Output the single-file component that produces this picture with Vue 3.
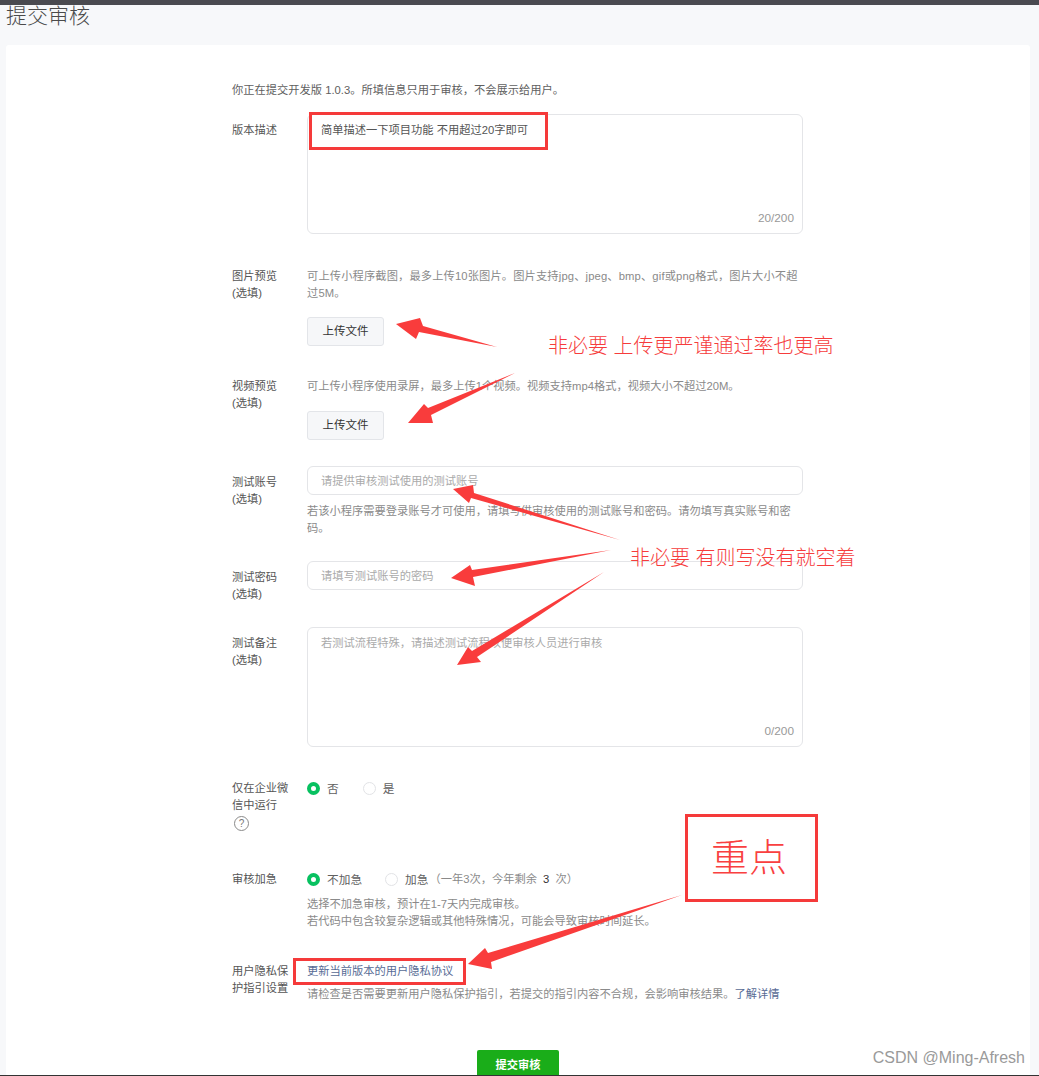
<script setup>
import {ref} from "vue";

const desc = ref("简单描述一下项目功能 不用超过20字即可");

// 标注箭头
const arrows = [
  "396,324 420,318 423,326 497,347 419,332 416,339",
  "515,373 428,408 424,404 408,423 433,423 431,415",
  "453,489 473,485 474,493 620,540 471,498 469,503",
  "611,550 472,570 470,565 451,578 475,586 473,577",
  "604,572 472,651 468,647 457,665 481,662 477,657",
  "682,895 488,953 485,948 468,964 492,969 491,962"
];
</script>

<template>
  <div class="page">
    <div class="topbar"></div>
    <h1 class="title">提交审核</h1>
    <div class="card">
      <div class="form">
        <p class="intro">你正在提交开发版 1.0.3。所填信息只用于审核，不会展示给用户。</p>

        <div class="row row-desc">
          <div class="label pad">版本描述</div>
          <div class="control">
            <div class="area-wrap">
              <textarea class="area" v-model="desc"></textarea>
              <span class="counter">20/200</span>
            </div>
          </div>
        </div>

        <div class="row row-pic">
          <div class="label">图片预览<br>(选填)</div>
          <div class="control">
            <p class="hint">可上传小程序截图，最多上传10张图片。图片支持jpg、jpeg、bmp、gif或png格式，图片大小不超过5M。</p>
            <button class="upload upload-pic">上传文件</button>
          </div>
        </div>

        <div class="row row-video">
          <div class="label">视频预览<br>(选填)</div>
          <div class="control">
            <p class="hint">可上传小程序使用录屏，最多上传1个视频。视频支持mp4格式，视频大小不超过20M。</p>
            <button class="upload">上传文件</button>
          </div>
        </div>

        <div class="row row-account">
          <div class="label pad">测试账号<br>(选填)</div>
          <div class="control">
            <input class="field" placeholder="请提供审核测试使用的测试账号">
            <p class="hint hint-below">若该小程序需要登录账号才可使用，请填写供审核使用的测试账号和密码。请勿填写真实账号和密码。</p>
          </div>
        </div>

        <div class="row row-pass">
          <div class="label pad">测试密码<br>(选填)</div>
          <div class="control">
            <input class="field" placeholder="请填写测试账号的密码">
          </div>
        </div>

        <div class="row row-note">
          <div class="label pad">测试备注<br>(选填)</div>
          <div class="control">
            <div class="area-wrap">
              <textarea class="area" placeholder="若测试流程特殊，请描述测试流程以便审核人员进行审核"></textarea>
              <span class="counter">0/200</span>
            </div>
          </div>
        </div>

        <div class="row row-wework">
          <div class="label">
            仅在企业微信中运行
            <span class="help">?</span>
          </div>
          <div class="control radios">
            <span class="radio on"></span><span class="radio-text">否</span>
            <span class="radio second"></span><span class="radio-text">是</span>
          </div>
        </div>

        <div class="row row-urgent">
          <div class="label">审核加急</div>
          <div class="control">
            <div class="radios">
              <span class="radio on"></span><span class="radio-text">不加急</span>
              <span class="radio third"></span><span class="radio-text">加急</span>
              <span class="quota">（一年3次，今年剩余 <b>3</b> 次）</span>
            </div>
            <p class="hint hint-below">选择不加急审核，预计在1-7天内完成审核。<br>若代码中包含较复杂逻辑或其他特殊情况，可能会导致审核时间延长。</p>
          </div>
        </div>

        <div class="row row-privacy">
          <div class="label">用户隐私保护指引设置</div>
          <div class="control">
            <a class="link">更新当前版本的用户隐私协议</a>
            <p class="hint hint-below">请检查是否需要更新用户隐私保护指引，若提交的指引内容不合规，会影响审核结果。<a class="link">了解详情</a></p>
          </div>
        </div>
      </div>
      <button class="submit">提交审核</button>
    </div>

    <!-- 截图上的红色标注 -->
    <svg class="marks" width="1039" height="1076" viewBox="0 0 1039 1076">
      <polygon v-for="(points, i) in arrows" :key="i" :points="points" fill="#f93c3c"></polygon>
    </svg>
    <div class="box box-desc"></div>
    <div class="box box-link"></div>
    <div class="box box-key">重点</div>
    <div class="note note-upload">非必要 上传更严谨通过率也更高</div>
    <div class="note note-test">非必要 有则写没有就空着</div>
    <div class="watermark">CSDN @Ming-Afresh</div>
  </div>
</template>

<style scoped>
.page {
  position: relative;
  width: 1039px;
  height: 1076px;
  overflow: hidden;
  background: #f7f8fa;
  font-family: "Liberation Sans", "Noto Sans CJK SC", sans-serif;
  font-size: 11.25px;
  line-height: 17px;
  color: #555;
}

.page::after {
  content: "";
  position: absolute;
  left: 0;
  right: 0;
  bottom: 0;
  height: 1px;
  background: #333;
}

.topbar {
  height: 5px;
  background: #4a4a50;
}

.title {
  margin: 0 0 0 6px;
  height: 40px;
  font-size: 21px;
  font-weight: 300;
  line-height: 22px;
  color: #4a4a4a;
}

.card {
  margin: 0 9px 0 6px;
  height: 1100px;
  background: #fff;
  border-radius: 3px;
  padding-top: 37px;
  box-sizing: border-box;
}

.form {
  margin-left: 226px;
  width: 571px;
}

.intro {
  margin: 0;
  color: #606060;
}

.row {
  display: flex;
}

.label {
  flex: none;
  width: 61px;
  margin-right: 14px;
  color: #555;
}

.label.pad {
  padding-top: 8px;
}

.control {
  width: 496px;
}

.row-desc { margin-top: 15px; }
.row-pic { margin-top: 34px; }
.row-video { margin-top: 32px; }
.row-account { margin-top: 26px; }
.row-pass { margin-top: 24px; }
.row-note { margin-top: 24px; }
.row-wework { margin-top: 33px; }
.row-urgent { margin-top: 40px; }
.row-privacy { margin-top: 33px; }

.hint {
  margin: 0;
  color: #8a8a8a;
}

.row-pic .hint {
  letter-spacing: 0.13px;
}

.hint-below {
  margin-top: 8px;
}

.area-wrap {
  position: relative;
  height: 120px;
}

.area,
.field {
  display: block;
  width: 100%;
  box-sizing: border-box;
  border: 1px solid #e4e5e8;
  border-radius: 6px;
  background: #fff;
  padding: 7px 13px;
  font: inherit;
  color: #555;
  outline: none;
}

.area {
  height: 120px;
  resize: none;
}

.field {
  height: 29px;
  padding-top: 5px;
  padding-bottom: 5px;
}

.area::placeholder,
.field::placeholder {
  color: #aaa;
  opacity: 1;
}

.counter {
  position: absolute;
  right: 9px;
  bottom: 7px;
  color: #999;
  font-size: 11.8px;
}

.upload {
  display: block;
  width: 77px;
  height: 29px;
  margin-top: 16px;
  padding: 0;
  background: #f6f7f9;
  border: 1px solid #e3e5e9;
  border-radius: 3px;
  font: inherit;
  font-size: 11.5px;
  color: #333;
}

.upload-pic {
  margin-top: 15px;
}

.help {
  display: block;
  width: 13px;
  height: 13px;
  margin: 2px 0 0 2px;
  border: 1px solid #8a8a8a;
  border-radius: 50%;
  text-align: center;
  line-height: 13px;
  font-size: 10px;
  color: #777;
}

.radios {
  display: flex;
  align-items: center;
  height: 17px;
}

.radio {
  flex: none;
  width: 13px;
  height: 13px;
  box-sizing: border-box;
  border: 1px solid #e2e3e6;
  border-radius: 50%;
  background: #fff;
}

.radio.on {
  border: 4px solid #07c160;
}

.radio.second {
  margin-left: 24px;
}

.radio.third {
  margin-left: 23px;
}

.radio-text {
  margin-left: 7px;
  font-size: 11.7px;
  color: #606060;
}

.quota {
  margin-left: 1px;
  color: #8a8a8a;
}

.quota b {
  font-weight: 400;
  color: #333;
  margin: 0 3px;
}

.link {
  color: #576b95;
}

.row-privacy .hint-below {
  margin-top: 6px;
}

.submit {
  display: block;
  width: 82px;
  height: 30px;
  margin: 47px auto 0;
  padding: 0;
  border: none;
  border-radius: 2px;
  background: #1aad19;
  color: #fff;
  font: inherit;
  font-weight: 700;
}

.marks {
  position: absolute;
  left: 0;
  top: 0;
  pointer-events: none;
}

.box {
  position: absolute;
  box-sizing: border-box;
  border: 3px solid #f53a3a;
}

.box-desc {
  left: 309px;
  top: 112px;
  width: 239px;
  height: 38px;
}

.box-link {
  left: 293px;
  top: 958px;
  width: 173px;
  height: 27px;
}

.box-key {
  left: 685px;
  top: 814px;
  width: 133px;
  height: 88px;
  padding-right: 5px;
  display: flex;
  align-items: center;
  justify-content: center;
  font-size: 38px;
  font-weight: 300;
  color: #f94040;
}

.note {
  position: absolute;
  font-size: 20px;
  font-weight: 300;
  line-height: 24px;
  white-space: nowrap;
  color: #f63c3c;
}

.note-upload {
  left: 548px;
  top: 334px;
}

.note-test {
  left: 630px;
  top: 546px;
}

.watermark {
  position: absolute;
  right: 14px;
  top: 1048px;
  font-size: 16px;
  line-height: 20px;
  color: #9a9a9a;
}
</style>
